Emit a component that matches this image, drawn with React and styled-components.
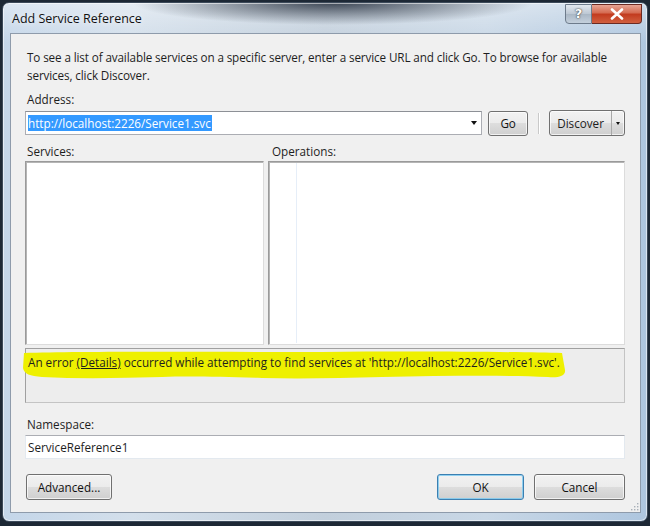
import React from "react";
import styled, { createGlobalStyle } from "styled-components";

const GlobalStyle = createGlobalStyle`
  html, body {
    margin: 0;
    padding: 0;
    background: #1d2835;
  }
  body {
    font-family: "Open Sans", "Liberation Sans", sans-serif;
    font-size: 11.7px;
    color: #1e1e1e;
  }
`;

export default function App() {
  return (
    <>
      <GlobalStyle />
      <Window>
        <TitleBar>
          <Title>Add Service Reference</Title>
          <CaptionButtons>
            <HelpButton>?</HelpButton>
            <CloseButton>
              <svg width="14" height="12" viewBox="0 0 14 12">
                <path
                  d="M2 1.5 L12 10.5 M12 1.5 L2 10.5"
                  stroke="#fff"
                  strokeWidth="2.6"
                  strokeLinecap="round"
                />
              </svg>
            </CloseButton>
          </CaptionButtons>
        </TitleBar>

        <Client>
          <Intro>
            To see a list of available services on a specific server, enter a
            service URL and click Go. To browse for available services, click
            Discover.
          </Intro>

          <Label $top={6}>Address:</Label>
          <AddressRow>
            <Combo>
              <Selected>http://localhost:2226/Service1.svc</Selected>
              <ComboArrow />
            </Combo>
            <Button $w={40} $h={25} $gap={6}>Go</Button>
            <Separator />
            <SplitButton>
              <SplitMain>Discover</SplitMain>
              <SplitDrop>
                <SmallArrow />
              </SplitDrop>
            </SplitButton>
          </AddressRow>

          <Columns>
            <Column $w={239}>
              <Label>Services:</Label>
              <ListBox />
            </Column>
            <Column $grow>
              <Label>Operations:</Label>
              <ListBox>
                <TreeGuide />
              </ListBox>
            </Column>
          </Columns>

          <ErrorPanel>
            <Highlight viewBox="0 0 548 30" preserveAspectRatio="none">
              <path
                d="M2 3 C60 1 200 2 300 2 C400 1 500 2 540 3 L543 20
                   C544 26 536 28 526 27 C480 25 420 26 360 27
                   C320 28 280 29 240 28 C200 27 170 26 140 27
                   C100 28 60 29 20 27 C8 26 2 24 1 18 Z"
                fill="#eef000"
              />
            </Highlight>
            <ErrorText>
              An error <DetailsLink>(Details)</DetailsLink> occurred while
              attempting to find services at 'http://localhost:2226/Service1.svc'.
            </ErrorText>
          </ErrorPanel>

          <Label $top={12}>Namespace:</Label>
          <TextBox>ServiceReference1</TextBox>

          <Footer>
            <Button $w={86} $h={26}>Advanced...</Button>
            <FooterRight>
              <Button $w={87} $h={26} $default>OK</Button>
              <Button $w={91} $h={26}>Cancel</Button>
            </FooterRight>
          </Footer>
          <Grip viewBox="0 0 10 10">
            {[
              [8, 2],
              [8, 5],
              [5, 5],
              [8, 8],
              [5, 8],
              [2, 8],
            ].map(([x, y]) => (
              <rect key={`${x}-${y}`} x={x} y={y} width="1.4" height="1.4" fill="#a8b0b8" />
            ))}
          </Grip>
        </Client>
      </Window>
    </>
  );
}

const Window = styled.div`
  width: 646px;
  height: 520px;
  margin: 2px 2px 0 2px;
  box-sizing: border-box;
  border: 1px solid #3c4a5a;
  border-radius: 7px;
  padding: 0 6px 8px 7px;
  display: flex;
  flex-direction: column;
  background: radial-gradient(
      ellipse 200px 22px at 330px 0px,
      rgba(35, 45, 60, 0.85),
      rgba(35, 45, 60, 0) 100%
    ),
    linear-gradient(
      to bottom,
      rgba(255, 255, 255, 0.4) 0px,
      rgba(255, 255, 255, 0) 40px
    ),
    linear-gradient(
      to right,
      #c4d6e9 0%,
      #d3dfeb 20%,
      #c2cfdc 50%,
      #c8d7e6 75%,
      #aec6df 100%
    );
  box-shadow: inset 0 0 0 1px rgba(255, 255, 255, 0.55);
`;

const TitleBar = styled.div`
  height: 30px;
  display: flex;
  justify-content: space-between;
  align-items: flex-start;
  flex-shrink: 0;
`;

const Title = styled.div`
  font-size: 12.5px;
  color: #111;
  padding: 7px 0 0 2px;
  text-shadow: 0 0 6px rgba(255, 255, 255, 0.9);
`;

const CaptionButtons = styled.div`
  display: flex;
  margin-right: -1px;
  margin-top: 1px;
`;

const HelpButton = styled.div`
  width: 27px;
  height: 20px;
  box-sizing: border-box;
  border: 1px solid #6d7b8b;
  border-radius: 0 0 0 4px;
  background: linear-gradient(to bottom, #e2e8ef, #bcc7d3 50%, #aab7c5 51%, #c4d0dc);
  color: #fff;
  font-family: "DejaVu Sans", sans-serif;
  font-weight: bold;
  font-size: 13px;
  text-align: center;
  line-height: 18px;
  text-shadow: 0 0 2px #444, 0 0 1px #333;
`;

const CloseButton = styled.div`
  width: 50px;
  height: 20px;
  box-sizing: border-box;
  border: 1px solid #6b2a22;
  border-left: none;
  border-radius: 0 0 4px 0;
  background: linear-gradient(to bottom, #e8a493, #d4694f 45%, #c23a1e 50%, #d1603f 100%);
  display: flex;
  align-items: center;
  justify-content: center;
`;

const Client = styled.div`
  flex: 1;
  position: relative;
  box-sizing: border-box;
  background: #f0f0f0;
  border: 1px solid #8e9bab;
  padding: 14px 15px 0 14px;
  display: flex;
  flex-direction: column;
`;

const Intro = styled.div`
  line-height: 18px;
  padding-left: 2px;
  letter-spacing: -0.12px;
`;

const Label = styled.div`
  line-height: 18px;
  padding-left: 2px;
  margin-top: ${(p) => p.$top || 0}px;
`;

const AddressRow = styled.div`
  display: flex;
  align-items: center;
  height: 26px;
  margin-top: 2px;
`;

const Combo = styled.div`
  width: 458px;
  height: 24px;
  box-sizing: border-box;
  background: #fff;
  border: 1px solid #abadb3;
  border-top-color: #8d9096;
  display: flex;
  align-items: center;
  padding-left: 2px;
`;

const Selected = styled.span`
  background: #3399ff;
  color: #fff;
  line-height: 16px;
  padding-right: 1px;
`;

const ComboArrow = styled.div`
  margin-left: auto;
  margin-right: 4px;
  border-style: solid;
  border-width: 4px 3.5px 0 3.5px;
  border-color: #111 transparent transparent transparent;
`;

const Button = styled.div`
  width: ${(p) => p.$w}px;
  height: ${(p) => p.$h}px;
  box-sizing: border-box;
  display: flex;
  align-items: center;
  justify-content: center;
  border: 1px solid ${(p) => (p.$default ? "#3c7fb1" : "#707070")};
  border-radius: 3px;
  background: linear-gradient(to bottom, #f2f2f2 0%, #ebebeb 49%, #dddddd 50%, #cfcfcf 100%);
  box-shadow: inset 0 0 0 1px
    ${(p) => (p.$default ? "rgba(120, 200, 240, 0.8)" : "rgba(255, 255, 255, 0.7)")};
  color: #111;
  flex-shrink: 0;
  margin-left: ${(p) => p.$gap || 0}px;
`;

const Separator = styled.div`
  width: 1px;
  height: 21px;
  background: #c9c9c9;
  border-right: 1px solid #fff;
  margin: 0 9px 0 10px;
`;

const SplitButton = styled.div`
  width: 76px;
  height: 26px;
  box-sizing: border-box;
  display: flex;
  border: 1px solid #707070;
  border-radius: 3px;
  background: linear-gradient(to bottom, #f2f2f2 0%, #ebebeb 49%, #dddddd 50%, #cfcfcf 100%);
  box-shadow: inset 0 0 0 1px rgba(255, 255, 255, 0.7);
`;

const SplitMain = styled.div`
  flex: 1;
  display: flex;
  align-items: center;
  justify-content: center;
  border-right: 1px solid #a8a8a8;
`;

const SplitDrop = styled.div`
  width: 12px;
  display: flex;
  align-items: center;
  justify-content: center;
`;

const SmallArrow = styled.div`
  border-style: solid;
  border-width: 3px 2.5px 0 2.5px;
  border-color: #111 transparent transparent transparent;
`;

const Columns = styled.div`
  display: flex;
  gap: 4px;
  margin-top: 6px;
`;

const Column = styled.div`
  display: flex;
  flex-direction: column;
  width: ${(p) => (p.$grow ? "auto" : `${p.$w}px`)};
  flex: ${(p) => (p.$grow ? 1 : "none")};
  & > div:first-child {
    padding-left: ${(p) => (p.$grow ? 4 : 2)}px;
  }
`;

const ListBox = styled.div`
  height: 184px;
  margin-top: 1px;
  box-sizing: border-box;
  background: #fff;
  border: 1px solid #828790;
  border-color: #9a9a9a #dcdcdc #dcdcdc #9a9a9a;
  box-shadow: inset 1px 1px 0 #b5b5b5;
  position: relative;
`;

const TreeGuide = styled.div`
  position: absolute;
  left: 27px;
  top: 1px;
  bottom: 1px;
  width: 1px;
  background: #e6eef8;
`;

const ErrorPanel = styled.div`
  position: relative;
  height: 55px;
  margin-top: 3px;
  box-sizing: border-box;
  background: #ededed;
  border: 1px solid #c4c4c4;
  border-top-color: #a0a0a0;
  border-left-color: #a0a0a0;
  padding: 4px 0 0 2px;
`;

const Highlight = styled.svg`
  position: absolute;
  left: -4px;
  top: 1px;
  width: 548px;
  height: 30px;
`;

const ErrorText = styled.div`
  position: relative;
  line-height: 18px;
`;

const DetailsLink = styled.span`
  text-decoration: underline;
`;

const TextBox = styled.div`
  height: 24px;
  margin-top: 2px;
  box-sizing: border-box;
  background: #fff;
  border: 1px solid #e3e9ef;
  border-top-color: #abadb3;
  display: flex;
  align-items: center;
  padding-left: 2px;
`;

const Footer = styled.div`
  display: flex;
  justify-content: space-between;
  margin-top: 15px;
  padding-left: 1px;
`;

const FooterRight = styled.div`
  display: flex;
  gap: 10px;
`;

const Grip = styled.svg`
  position: absolute;
  right: 1px;
  bottom: 1px;
  width: 10px;
  height: 10px;
`;
